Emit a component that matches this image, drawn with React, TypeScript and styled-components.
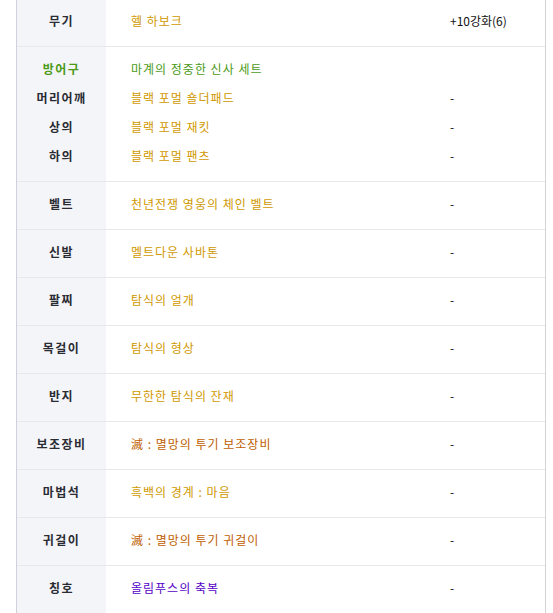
import React from "react";
import styled, { createGlobalStyle } from "styled-components";

const Global = createGlobalStyle`
  html, body { margin: 0; padding: 0; background: #ffffff; }
  body { font-family: "Noto Sans CJK KR", "Noto Sans", sans-serif; font-size: 12px; }
`;

const Table = styled.div`
  margin: -1px 0 0 16px;
  width: 530px;
  box-sizing: border-box;
  border-left: 1px solid #cfd2db;
  border-right: 1px solid #d3d3d3;
`;

const Row = styled.div`
  display: grid;
  grid-template-columns: 89px 320px 1fr;
  border-bottom: 1px solid #e7e8ec;
`;

const Cell = styled.div<{ $kind: "label" | "item" | "value" }>`
  padding: 7px 0 11px ${(p) => (p.$kind === "label" ? "0" : p.$kind === "item" ? "25px" : "24px")};
  background: ${(p) => (p.$kind === "label" ? "#f4f5f9" : "#ffffff")};
  text-align: ${(p) => (p.$kind === "label" ? "center" : "left")};
  font-weight: ${(p) => (p.$kind === "label" ? 700 : 400)};
  letter-spacing: ${(p) => (p.$kind === "label" ? "1.5px" : p.$kind === "item" ? "1px" : "0")};
  color: ${(p) => (p.$kind === "value" ? "#111111" : "#2a2c33")};
  display: flex;
  flex-direction: column;
`;

const Line = styled.div<{ $color?: string }>`
  height: 29px;
  line-height: 29px;
  white-space: nowrap;
  color: ${(p) => p.$color || "inherit"};
`;

const GOLD = "#d09800";
const GREEN = "#4b9a18";
const BROWN = "#c05e00";
const PURPLE = "#5500c8";

type L = { text: string; color?: string };
type RowData = { labels: L[]; items: L[]; values: string[] };

const rows: RowData[] = [
  { labels: [{ text: "무기" }], items: [{ text: "헬 하보크", color: GOLD }], values: ["+10강화(6)"] },
  {
    labels: [{ text: "방어구", color: GREEN }, { text: "머리어깨" }, { text: "상의" }, { text: "하의" }],
    items: [
      { text: "마계의 정중한 신사 세트", color: GREEN },
      { text: "블랙 포멀 숄더패드", color: GOLD },
      { text: "블랙 포멀 재킷", color: GOLD },
      { text: "블랙 포멀 팬츠", color: GOLD },
    ],
    values: ["", "-", "-", "-"],
  },
  { labels: [{ text: "벨트" }], items: [{ text: "천년전쟁 영웅의 체인 벨트", color: GOLD }], values: ["-"] },
  { labels: [{ text: "신발" }], items: [{ text: "멜트다운 사바톤", color: GOLD }], values: ["-"] },
  { labels: [{ text: "팔찌" }], items: [{ text: "탐식의 얼개", color: GOLD }], values: ["-"] },
  { labels: [{ text: "목걸이" }], items: [{ text: "탐식의 형상", color: GOLD }], values: ["-"] },
  { labels: [{ text: "반지" }], items: [{ text: "무한한 탐식의 잔재", color: GOLD }], values: ["-"] },
  { labels: [{ text: "보조장비" }], items: [{ text: "滅 : 멸망의 투기 보조장비", color: BROWN }], values: ["-"] },
  { labels: [{ text: "마법석" }], items: [{ text: "흑백의 경계 : 마음", color: GOLD }], values: ["-"] },
  { labels: [{ text: "귀걸이" }], items: [{ text: "滅 : 멸망의 투기 귀걸이", color: BROWN }], values: ["-"] },
  { labels: [{ text: "칭호" }], items: [{ text: "올림푸스의 축복", color: PURPLE }], values: ["-"] },
];

export default function App() {
  return (
    <>
      <Global />
      <Table>
        {rows.map((r, i) => (
          <Row key={i}>
            <Cell $kind="label">
              {r.labels.map((l, j) => (
                <Line key={j} $color={l.color}>{l.text}</Line>
              ))}
            </Cell>
            <Cell $kind="item">
              {r.items.map((l, j) => (
                <Line key={j} $color={l.color}>{l.text}</Line>
              ))}
            </Cell>
            <Cell $kind="value">
              {r.values.map((v, j) => (
                <Line key={j}>{v}</Line>
              ))}
            </Cell>
          </Row>
        ))}
      </Table>
    </>
  );
}
